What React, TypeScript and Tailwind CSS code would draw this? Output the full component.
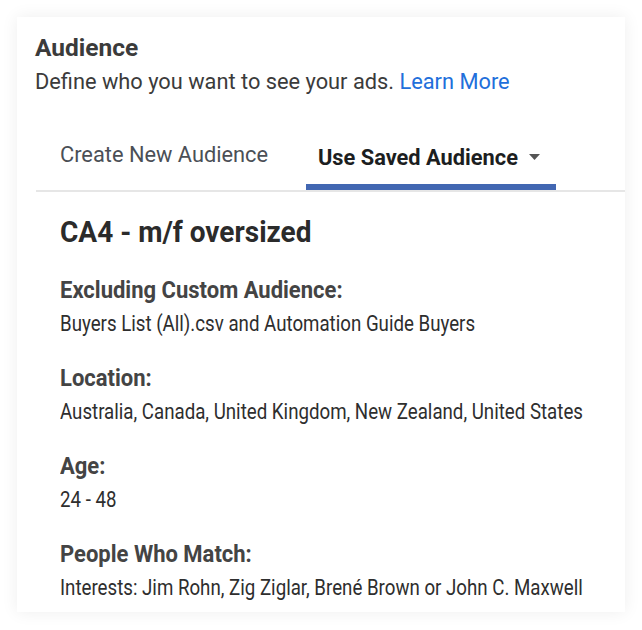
import React from "react";

const sections = [
  { label: "Excluding Custom Audience:", value: "Buyers List (All).csv and Automation Guide Buyers" },
  { label: "Location:", value: "Australia, Canada, United Kingdom, New Zealand, United States" },
  { label: "Age:", value: "24 - 48" },
  { label: "People Who Match:", value: "Interests: Jim Rohn, Zig Ziglar, Brené Brown or John C. Maxwell" },
];

export default function App() {
  return (
    <div className="w-[642px] h-[630px] bg-white pt-[17px] pl-[17px]" style={{ fontFamily: "Roboto, 'Liberation Sans', sans-serif" }}>
      <div className="w-[608px] h-[595px] bg-white shadow-[0_0_16px_rgba(0,0,0,0.07)] flex flex-col">
        <div className="pl-[18px] pt-[16px]">
          <div className="h-[30px] text-[24.5px] font-bold text-[#3b3b3b] leading-[30px]">Audience</div>
          <div className="h-[30px] mt-[4px] text-[21.8px] text-[#3b3b3b] leading-[30px] whitespace-nowrap">
            Define who you want to see your ads. <span className="text-[#216fdb]">Learn More</span>
          </div>
        </div>
        <div className="ml-[19px] mt-[33px] flex border-b-2 border-[#e6e6e6] h-[62px]">
          <div className="w-[270px] pl-[24px] pt-[10px]">
            <div className="h-[30px] text-[21.8px] text-[#4b4f56] leading-[30px] whitespace-nowrap">Create New Audience</div>
          </div>
          <div className="w-[250px] relative pt-[13px]">
            <div className="h-[30px] pl-[12px] text-[21.8px] font-bold text-[#1c1e21] leading-[30px] flex items-center whitespace-nowrap">
              Use Saved Audience
              <svg className="ml-[11px] mt-[-2px]" width="11" height="6" viewBox="0 0 11 6"><path d="M0 0h11L5.5 6z" fill="#555" /></svg>
            </div>
            <div className="absolute left-0 right-0 bottom-0 h-[6px] bg-[#4267b2]" />
          </div>
        </div>
        <div className="pl-[43px] pt-[22px]">
          <div className="h-[36px] text-[28px] font-bold text-[#2b2b2b] leading-[36px] whitespace-nowrap">
            <span className="inline-block scale-y-[1.06]">CA4 - m/f oversized</span>
          </div>
          {sections.map((s, i) => (
            <div key={i} className="mt-[25px]">
              <div className="h-[30px] text-[22px] font-bold text-[#444] leading-[30px] whitespace-nowrap">
                <span className="inline-block scale-y-[1.08]">{s.label}</span>
              </div>
              <div className="h-[28px] mt-[5px] text-[18.7px] text-[#2e2e2e] leading-[28px] whitespace-nowrap">
                <span className="inline-block scale-y-[1.16]">{s.value}</span>
              </div>
            </div>
          ))}
        </div>
      </div>
    </div>
  );
}
